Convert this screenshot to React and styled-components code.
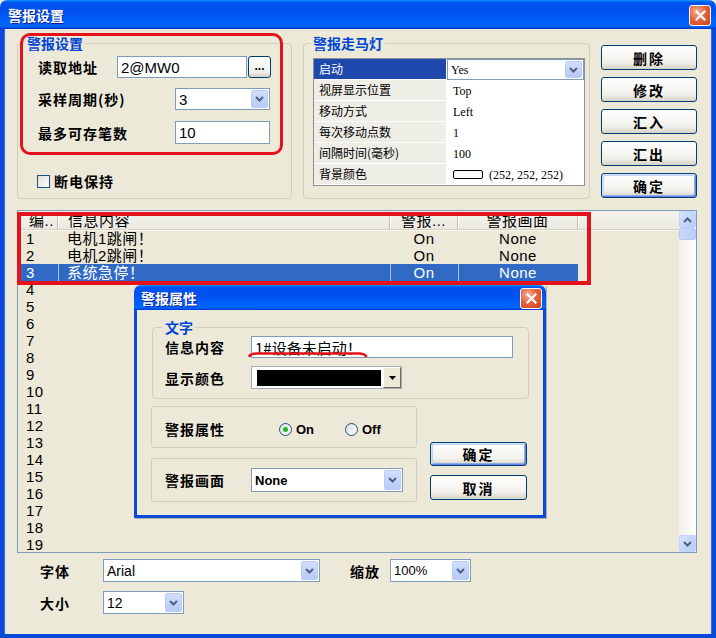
import React from 'react';
import styled, { createGlobalStyle, css } from 'styled-components';

const CJK = `"Noto Sans CJK SC", "Liberation Sans", sans-serif`;
const SANS = `"Liberation Sans", "Noto Sans CJK SC", sans-serif`;
const SERIF = `"Liberation Serif", "Noto Sans CJK SC", serif`;

const GlobalStyle = createGlobalStyle`
  html, body { margin: 0; padding: 0; background: #ECE9D8; }
  body { font-family: ${SANS}; }
  * { box-sizing: border-box; }
`;

const XP_TITLE = `linear-gradient(to bottom, #0997FF 0%, #0053EE 9%, #0050EE 40%, #0066FF 86%, #0060F8 93%, #003DD7 97%, #003DD7 100%)`;

// window chrome
const Window = styled.div`
  position: relative;
  width: 716px;
  height: 638px;
  display: flex;
  flex-direction: column;
  background: #ECE9D8;
  overflow: hidden;
`;

const TitleBar = styled.div`
  flex: none;
  height: ${p => p.$h}px;
  display: flex;
  align-items: center;
  justify-content: space-between;
  padding: 1px ${p => p.$pr}px 0 ${p => p.$pl}px;
  border-radius: 7px 7px 0 0;
  background: ${XP_TITLE};
`;

const TitleText = styled.span`
  font: bold 14px/1 ${CJK};
  color: #fff;
  text-shadow: 1px 1px 0 #0A1E8C;
`;

const CloseBox = styled.div`
  width: 22px;
  height: 21px;
  border: 1px solid #fff;
  border-radius: 3px;
  background: radial-gradient(circle at 35% 30%, #F6B29A 0%, #E5643F 45%, #C7401A 100%);
  display: flex;
  align-items: center;
  justify-content: center;
`;

const Frame = styled.div`
  flex: 1;
  border: 4px solid #0A4ADB;
  border-top: none;
  box-shadow: inset 1px 0 #2E6CEB, inset -1px 0 #2E6CEB;
  padding: 7px 15px 0 13px;
`;

// group boxes
const TopRow = styled.div`
  display: flex;
  gap: 11px;
  height: 163px;
`;

const GroupWrap = styled.div`
  position: relative;
`;

const GroupBox = styled.fieldset`
  margin: 0;
  min-width: 0;
  width: ${p => p.$w}px;
  height: ${p => p.$h}px;
  padding: ${p => p.$pad};
  border: 1px solid #D0D0BF;
  border-radius: 4px;
`;

// the legend sits inside the fieldset padding, so its offset is given per box
const Legend = styled.legend`
  margin-left: ${p => p.$ml}px;
  padding: 0 2px;
  font: bold 14px/14px ${CJK};
  color: #0046D5;
`;

const PlainBox = styled.div`
  height: ${p => p.$h}px;
  border: 1px solid #D0D0BF;
  border-radius: 3px;
  display: flex;
  align-items: center;
  padding: ${p => p.$pt || 0}px 0 0 13px;
`;

const FieldRow = styled.div`
  display: flex;
  align-items: center;
  margin-top: ${p => p.$mt || 0}px;
`;

const FieldLabel = styled.span`
  flex: none;
  width: ${p => p.$w}px;
  font: bold 14px/1 ${CJK};
  letter-spacing: 1px;
  color: #000;
`;

const TextBox = styled.div`
  position: relative;
  flex: none;
  width: ${p => p.$w}px;
  height: ${p => p.$h || 22}px;
  border: 1px solid #7F9DB9;
  background: #fff;
  display: flex;
  align-items: center;
  padding-left: 3px;
  font: ${p => p.$size || 15}px/1 ${p => p.$cjk ? CJK : SANS};
  color: #000;
`;

const EllipsisButton = styled.div`
  width: 23px;
  height: 22px;
  margin-left: 1px;
  border: 1px solid #003C74;
  border-radius: 3px;
  background: linear-gradient(#fff, #F0F0EA 75%, #D6D0C5);
  display: flex;
  align-items: center;
  justify-content: center;
  font: bold 12px/1 ${SANS};
  padding-bottom: 3px;
`;

const ComboBox = styled.div`
  flex: none;
  width: ${p => p.$w}px;
  height: ${p => p.$h || 22}px;
  border: 1px solid #7F9DB9;
  background: #fff;
  display: flex;
  align-items: stretch;
`;

const ComboText = styled.span`
  flex: 1;
  display: flex;
  align-items: center;
  padding-left: ${p => p.$pl ?? 3}px;
  font: ${p => p.$bold ? 'bold' : 'normal'} ${p => p.$size || 14}px/1 ${p => p.$serif ? SERIF : SANS};
  color: #000;
`;

const DropButton = styled.span`
  width: 17px;
  margin: 1px;
  border: 1px solid #BBCDF6;
  border-radius: 2px;
  background: linear-gradient(#D2DEFC, #B6CAF6);
  display: flex;
  align-items: center;
  justify-content: center;
`;

const Chevron = ({ up }) => (
  <svg width="9" height="6" viewBox="0 0 9 6">
    <path d={up ? 'M1 5 L4.5 1.5 L8 5' : 'M1 1 L4.5 4.5 L8 1'} fill="none" stroke="#4D6185" strokeWidth="2" />
  </svg>
);

const Combo = ({ w, h, bold, serif, size, children }) => (
  <ComboBox $w={w} $h={h}>
    <ComboText $bold={bold} $serif={serif} $size={size}>{children}</ComboText>
    <DropButton><Chevron /></DropButton>
  </ComboBox>
);

const CheckRow = styled.div`
  display: flex;
  align-items: center;
  gap: 4px;
  margin: 30px 0 0 -1px;
  font: bold 14px/1 ${CJK};
  letter-spacing: 1px;
`;

const CheckBox = styled.span`
  width: 13px;
  height: 13px;
  border: 1px solid #1C5180;
  background: linear-gradient(135deg, #DCDCD7, #fff);
`;

// red marks drawn over the picture
const Highlight = styled.div`
  position: absolute;
  left: ${p => p.$x}px;
  top: ${p => p.$y}px;
  width: ${p => p.$w}px;
  height: ${p => p.$h}px;
  border: ${p => p.$t}px solid #E4131B;
  border-radius: ${p => p.$r || 0}px;
  pointer-events: none;
`;

const Underline = styled.svg`
  position: absolute;
  left: -4px;
  top: 14px;
`;

// marquee property grid
const PropGrid = styled.div`
  width: 272px;
  border: 1px solid #8E9092;
  background: #fff;
`;

const PropRow = styled.div`
  display: flex;
  height: 21px;
`;

const PropName = styled.div`
  flex: none;
  width: 133px;
  display: flex;
  align-items: center;
  padding-left: 5px;
  font: 12px/1 ${CJK};
  background: ${p => (p.$selected ? '#1E48AC' : '#EEEDE6')};
  color: ${p => (p.$selected ? '#fff' : '#000')};
  border-bottom: 1px solid #fff;
  border-right: 1px solid #fff;
`;

const PropValue = styled.div`
  flex: 1;
  display: flex;
  align-items: center;
  gap: 6px;
  padding-left: ${p => (p.$flush ? 0 : 6)}px;
  font: 12px/1 ${SERIF};
`;

const Swatch = styled.span`
  width: 30px;
  height: 9px;
  border: 1px solid #000;
  border-radius: 2px;
  background: #FCFCFC;
`;

// buttons
const ButtonColumn = styled.div`
  display: flex;
  flex-direction: column;
  gap: ${p => p.$gap}px;
  padding-top: ${p => p.$pt}px;
  margin-left: ${p => p.$ml || 0}px;
`;

const XPButton = styled.div`
  width: ${p => p.$w}px;
  height: ${p => p.$h}px;
  border: 1px solid #003C74;
  border-radius: 3px;
  background: linear-gradient(#FFFFFF, #F2F1EC 70%, #D8D2C6);
  display: flex;
  align-items: center;
  justify-content: center;
  font: bold 14px/1 ${CJK};
  letter-spacing: 2px;
  color: #000;
  ${p => p.$default && css`
    box-shadow: inset 1px 1px #CEE7FF, inset -1px -1px #6982EE, inset 2px 2px #BCD4F6, inset -2px -2px #89ADE4;
  `}
`;

// list view
const ListView = styled.div`
  position: relative;
  margin-top: 11px;
  width: 680px;
  height: 343px;
  border: 1px solid #7F9DB9;
  display: flex;
`;

const ListContent = styled.div`
  flex: 1;
  overflow: hidden;
  background: #ECE9D8;
`;

const ListHeader = styled.div`
  display: flex;
  height: 19px;
  border-bottom: 1px solid #D5D2C4;
  box-shadow: 0 1px #F7F6F1;
  background: linear-gradient(#F3F2EC, #EBEAE2);
`;

const HeaderCell = styled.div`
  flex: none;
  width: ${p => p.$w}px;
  padding-left: ${p => p.$pl || 0}px;
  text-align: ${p => p.$align || 'left'};
  font: 15px/20px ${SANS};
  letter-spacing: 0.5px;
  color: #000;
  white-space: nowrap;
  border-right: 1px solid #C7C5B2;
  box-shadow: 1px 0 #fff;
`;

const ListRow = styled.div`
  display: flex;
  width: 560px;
  height: 17px;
  background: ${p => (p.$selected ? '#316AC5' : 'transparent')};
  color: ${p => (p.$selected ? '#fff' : '#000')};
`;

const Cell = styled.div`
  flex: none;
  width: ${p => p.$w}px;
  padding-left: ${p => p.$pl || 0}px;
  text-align: ${p => p.$align || 'left'};
  font: 15px/17px ${SANS};
  letter-spacing: 0.5px;
  white-space: nowrap;
  ${p => p.$selected && p.$divider && css`box-shadow: inset 1px 0 #A9BFE6;`}
`;

const ScrollBar = styled.div`
  flex: none;
  width: 17px;
  display: flex;
  flex-direction: column;
  background: linear-gradient(to right, #F3F1EC, #FEFEFB);
`;

const ScrollButton = styled.div`
  height: 17px;
  border: 1px solid #C3D3FD;
  border-radius: 2px;
  background: linear-gradient(135deg, #D6E2FD, #B6CBF7);
  display: flex;
  align-items: center;
  justify-content: center;
`;

const ScrollThumb = styled.div`
  height: 12px;
  border: 1px solid #B7CAF5;
  border-radius: 2px;
  background: linear-gradient(to right, #CAD9FC, #BACDF8);
`;

const ScrollTrack = styled.div`
  flex: 1;
`;

// bottom form
const BottomForm = styled.div`
  display: flex;
  flex-direction: column;
  gap: 9px;
  margin-top: 6px;
  padding-left: 23px;
`;

const BottomLabel = styled.span`
  flex: none;
  width: ${p => p.$w}px;
  margin-left: ${p => p.$ml || 0}px;
  font: bold 14px/1 ${CJK};
  letter-spacing: 1px;
`;

// alarm property dialog
const Dialog = styled.div`
  position: absolute;
  left: 134px;
  top: 285px;
  width: 412px;
  height: 233px;
  display: flex;
  flex-direction: column;
  box-shadow: 1px 1px 0 rgba(0, 0, 0, 0.25);
`;

const DialogBody = styled.div`
  flex: 1;
  background: #ECE9D8;
  border: 3px solid #0A4ADB;
  border-top: none;
  padding: 10px 0 0 15px;
`;

const DialogLower = styled.div`
  display: flex;
  margin-top: 7px;
`;

const DialogBoxes = styled.div`
  width: 266px;
  margin-left: -1px;
  display: flex;
  flex-direction: column;
  gap: 10px;
`;

const RadioGroup = styled.div`
  display: flex;
  align-items: center;
`;

const RadioItem = styled.div`
  width: ${p => p.$w}px;
  display: flex;
  align-items: center;
  gap: 4px;
  font: bold 13px/1 ${SANS};
`;

const Radio = styled.span`
  width: 13px;
  height: 13px;
  border-radius: 50%;
  border: 1px solid #1C5180;
  background: linear-gradient(135deg, #DCDCD7, #fff);
  display: flex;
  align-items: center;
  justify-content: center;
  &::after {
    content: '';
    width: 5px;
    height: 5px;
    border-radius: 50%;
    background: ${p => (p.$checked ? '#2BB52B' : 'transparent')};
  }
`;

const ColorCombo = styled.div`
  width: 151px;
  height: 23px;
  border: 1px solid #A5ACB2;
  background: #fff;
  display: flex;
  align-items: stretch;
  padding: 3px 0 2px 5px;
`;

const ColorChip = styled.span`
  width: 125px;
  background: #000;
`;

const ClassicDrop = styled.span`
  width: 18px;
  margin: -3px 0 -2px 2px;
  background: #ECE9D8;
  border: 1px solid;
  border-color: #fff #716F64 #716F64 #fff;
  display: flex;
  align-items: center;
  justify-content: center;
`;

const CloseX = () => (
  <CloseBox>
    <svg width="11" height="11" viewBox="0 0 11 11">
      <path d="M1.5 1.5 L9.5 9.5 M9.5 1.5 L1.5 9.5" stroke="#fff" strokeWidth="2.2" strokeLinecap="square" />
    </svg>
  </CloseBox>
);

const marquee = [
  ['视屏显示位置', 'Top'],
  ['移动方式', 'Left'],
  ['每次移动点数', '1'],
  ['间隔时间(毫秒)', '100'],
];

const alarms = [
  { no: '1', text: '电机1跳闸！', state: 'On', screen: 'None' },
  { no: '2', text: '电机2跳闸！', state: 'On', screen: 'None' },
  { no: '3', text: '系统急停！', state: 'On', screen: 'None', selected: true },
];

const rows = Array.from({ length: 19 }, (_, i) => alarms[i] || { no: String(i + 1) });

export default function App() {
  return (
    <Window>
      <GlobalStyle />
      <TitleBar $h={29} $pl={8} $pr={5}>
        <TitleText>警报设置</TitleText>
        <CloseX />
      </TitleBar>

      <Frame>
        <TopRow>
          <GroupWrap>
            <GroupBox $w={275} $h={163} $pad="6px 0 0 20px">
              <Legend $ml={-13}>警报设置</Legend>
              <FieldRow>
                <FieldLabel $w={79}>读取地址</FieldLabel>
                <TextBox $w={130}>2@MW0</TextBox>
                <EllipsisButton>...</EllipsisButton>
              </FieldRow>
              <FieldRow $mt={10}>
                <FieldLabel $w={137}>采样周期(秒)</FieldLabel>
                <Combo w={95} size={15}>3</Combo>
              </FieldRow>
              <FieldRow $mt={11}>
                <FieldLabel $w={137}>最多可存笔数</FieldLabel>
                <TextBox $w={95} $h={23}>10</TextBox>
              </FieldRow>
              <CheckRow>
                <CheckBox />
                断电保持
              </CheckRow>
            </GroupBox>
            <Highlight $x={3} $y={-3} $w={263} $h={122} $t={3} $r={10} />
          </GroupWrap>

          <GroupBox $w={287} $h={163} $pad="8px 0 0 9px">
            <Legend $ml={-2}>警报走马灯</Legend>
            <PropGrid>
              <PropRow>
                <PropName $selected>启动</PropName>
                <PropValue $flush>
                  <Combo w={137} h={21} serif size={12}>Yes</Combo>
                </PropValue>
              </PropRow>
              {marquee.map(([name, value]) => (
                <PropRow key={name}>
                  <PropName>{name}</PropName>
                  <PropValue>{value}</PropValue>
                </PropRow>
              ))}
              <PropRow>
                <PropName>背景颜色</PropName>
                <PropValue>
                  <Swatch />
                  (252, 252, 252)
                </PropValue>
              </PropRow>
            </PropGrid>
          </GroupBox>

          <ButtonColumn $gap={7} $pt={9}>
            <XPButton $w={96} $h={25}>删除</XPButton>
            <XPButton $w={96} $h={25}>修改</XPButton>
            <XPButton $w={96} $h={25}>汇入</XPButton>
            <XPButton $w={96} $h={25}>汇出</XPButton>
            <XPButton $w={96} $h={25} $default>确定</XPButton>
          </ButtonColumn>
        </TopRow>

        <ListView>
          <ListContent>
            <ListHeader>
              <HeaderCell $w={40} $pl={11}>编..</HeaderCell>
              <HeaderCell $w={332} $pl={10}>信息内容</HeaderCell>
              <HeaderCell $w={68} $align="center">警报...</HeaderCell>
              <HeaderCell $w={120} $align="center">警报画面</HeaderCell>
            </ListHeader>
            {rows.map(r => (
              <ListRow key={r.no} $selected={r.selected}>
                <Cell $w={40} $pl={8}>{r.no}</Cell>
                <Cell $w={332} $pl={9} $selected={r.selected} $divider>{r.text}</Cell>
                <Cell $w={68} $align="center" $selected={r.selected} $divider>{r.state}</Cell>
                <Cell $w={120} $align="center" $selected={r.selected} $divider>{r.screen}</Cell>
              </ListRow>
            ))}
          </ListContent>
          <ScrollBar>
            <ScrollButton><Chevron up /></ScrollButton>
            <ScrollThumb />
            <ScrollTrack />
            <ScrollButton><Chevron /></ScrollButton>
          </ScrollBar>
          <Highlight $x={-1} $y={1} $w={574} $h={73} $t={4} />
        </ListView>

        <BottomForm>
          <FieldRow>
            <BottomLabel $w={63}>字体</BottomLabel>
            <Combo w={217} h={23}>Arial</Combo>
            <BottomLabel $w={40} $ml={30}>缩放</BottomLabel>
            <Combo w={81} h={23} size={13}>100%</Combo>
          </FieldRow>
          <FieldRow>
            <BottomLabel $w={63}>大小</BottomLabel>
            <Combo w={81} h={23} size={14}>12</Combo>
          </FieldRow>
        </BottomForm>
      </Frame>

      <Dialog>
        <TitleBar $h={25} $pl={7} $pr={4}>
          <TitleText>警报属性</TitleText>
          <CloseX />
        </TitleBar>
        <DialogBody>
          <GroupBox $w={377} $h={79} $pad="2px 0 0 12px">
            <Legend $ml={-2}>文字</Legend>
            <FieldRow>
              <FieldLabel $w={86}>信息内容</FieldLabel>
              <TextBox $w={262} $cjk $size={15}>
                1#设备未启动！
                <Underline width="120" height="7" viewBox="0 0 120 7">
                  <path d="M1.5 5 Q3 2.5 9 2.5 L111 2.5 Q116 2.5 118 5" fill="none" stroke="#E4131B" strokeWidth="2.6" strokeLinecap="round" />
                </Underline>
              </TextBox>
            </FieldRow>
            <FieldRow $mt={8}>
              <FieldLabel $w={86}>显示颜色</FieldLabel>
              <ColorCombo>
                <ColorChip />
                <ClassicDrop>
                  <svg width="7" height="4" viewBox="0 0 7 4"><path d="M0 0 H7 L3.5 4 Z" fill="#000" /></svg>
                </ClassicDrop>
              </ColorCombo>
            </FieldRow>
          </GroupBox>

          <DialogLower>
            <DialogBoxes>
              <PlainBox $h={42} $pt={4}>
                <FieldLabel $w={114}>警报属性</FieldLabel>
                <RadioGroup>
                  <RadioItem $w={66}><Radio $checked />On</RadioItem>
                  <RadioItem $w={50}><Radio />Off</RadioItem>
                </RadioGroup>
              </PlainBox>
              <PlainBox $h={44}>
                <FieldLabel $w={86}>警报画面</FieldLabel>
                <Combo w={152} h={24} bold size={13}>None</Combo>
              </PlainBox>
            </DialogBoxes>
            <ButtonColumn $gap={9} $pt={36} $ml={13}>
              <XPButton $w={97} $h={24} $default>确定</XPButton>
              <XPButton $w={97} $h={25}>取消</XPButton>
            </ButtonColumn>
          </DialogLower>
        </DialogBody>
      </Dialog>
    </Window>
  );
}
